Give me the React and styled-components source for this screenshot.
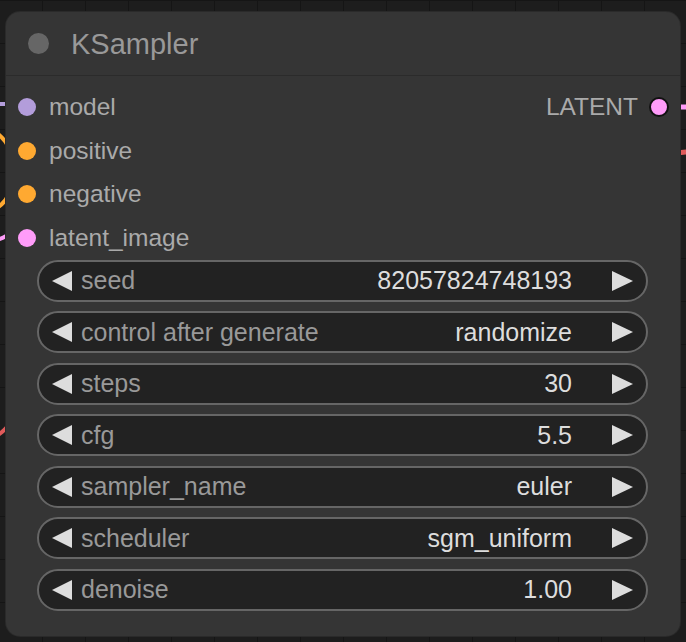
import styled, { createGlobalStyle } from 'styled-components'

const GlobalStyle = createGlobalStyle`
  html, body {
    margin: 0;
    padding: 0;
    background: #1d1d1d;
  }
  * { box-sizing: border-box; }
`

const inputs = [
  { name: 'model', color: '#b39ddb' },
  { name: 'positive', color: '#ffa931' },
  { name: 'negative', color: '#ffa931' },
  { name: 'latent_image', color: '#ff9cf9' },
]

const widgets = [
  { label: 'seed', value: '82057824748193' },
  { label: 'control after generate', value: 'randomize' },
  { label: 'steps', value: '30' },
  { label: 'cfg', value: '5.5' },
  { label: 'sampler_name', value: 'euler' },
  { label: 'scheduler', value: 'sgm_uniform' },
  { label: 'denoise', value: '1.00' },
]

function App() {
  return (
    <>
      <GlobalStyle />
      <Canvas>
        <Wires width="686" height="642">
          <path d="M-10 104 L8 104" stroke="#b39ddb" strokeWidth="4" fill="none" />
          <path d="M-10 128 C 2 136, 6 142, 8 146" stroke="#ffa931" strokeWidth="4" fill="none" />
          <path d="M-10 212 C 2 206, 6 200, 8 196" stroke="#ffa931" strokeWidth="4" fill="none" />
          <path d="M-10 242 C 0 240, 4 237, 8 235" stroke="#ff9cf9" strokeWidth="4" fill="none" />
          <path d="M-10 438 C 0 436, 4 430, 8 426" stroke="#e05a5a" strokeWidth="4" fill="none" />
          <path d="M676 107 L696 107" stroke="#ff9cf9" strokeWidth="5" fill="none" />
          <path d="M676 153 L696 151" stroke="#e05a5a" strokeWidth="5" fill="none" />
        </Wires>
        <Node>
          <Title>
            <TitleDot />
            <TitleText>KSampler</TitleText>
          </Title>
          <Slots>
            {inputs.map((input, index) => (
              <SlotRow key={input.name}>
                <InputSlot>
                  <Dot color={input.color} />
                  <SlotLabel>{input.name}</SlotLabel>
                </InputSlot>
                {index === 0 && (
                  <OutputSlot>
                    <SlotLabel>LATENT</SlotLabel>
                    <Dot color="#ff9cf9" $outlined />
                  </OutputSlot>
                )}
              </SlotRow>
            ))}
          </Slots>
          <Widgets>
            {widgets.map((w) => (
              <Widget key={w.label}>
                <Arrow $dir="left" />
                <WidgetLabel>{w.label}</WidgetLabel>
                <WidgetValue>{w.value}</WidgetValue>
                <Arrow $dir="right" />
              </Widget>
            ))}
          </Widgets>
        </Node>
      </Canvas>
    </>
  )
}

const Canvas = styled.div`
  position: relative;
  width: 686px;
  height: 642px;
  overflow: hidden;
  padding: 12px 6px 6px 6px;
  background-color: #1d1d1d;
  background-image:
    linear-gradient(to right, #151515 1px, transparent 1px),
    linear-gradient(to bottom, #151515 1px, transparent 1px);
  background-size: 43px 43px;
  background-position: -1px 0;
  font-family: Arial, "Liberation Sans", sans-serif;
`

const Wires = styled.svg`
  position: absolute;
  left: 0;
  top: 0;
`

const Node = styled.div`
  position: relative;
  width: 674px;
  height: 624px;
  background: #353535;
  border-radius: 14px;
  display: flex;
  flex-direction: column;
  box-shadow: 0 0 0 1px #2a2a2a;
`

const Title = styled.div`
  display: flex;
  align-items: center;
  height: 64px;
  padding-left: 22px;
  gap: 22px;
  border-bottom: 1px solid #2b2b2b;
`

const TitleDot = styled.div`
  width: 21px;
  height: 21px;
  border-radius: 50%;
  background: #666;
`

const TitleText = styled.div`
  color: #999;
  font-size: 29px;
  padding-top: 1px;
`

const Slots = styled.div`
  display: flex;
  flex-direction: column;
  padding-top: 9.5px;
`

const SlotRow = styled.div`
  display: flex;
  align-items: center;
  justify-content: space-between;
  height: 43.5px;
`

const InputSlot = styled.div`
  display: flex;
  align-items: center;
  gap: 13px;
  padding-left: 12px;
`

const OutputSlot = styled.div`
  display: flex;
  align-items: center;
  gap: 11px;
  padding-right: 11px;
`

const Dot = styled.div`
  width: ${(p) => (p.$outlined ? '20px' : '18px')};
  height: ${(p) => (p.$outlined ? '20px' : '18px')};
  border-radius: 50%;
  background: ${(p) => p.color};
  border: ${(p) => (p.$outlined ? '2px solid #111' : 'none')};
`

const SlotLabel = styled.span`
  color: #aaa;
  font-size: 24.5px;
`

const Widgets = styled.div`
  display: flex;
  flex-direction: column;
  gap: 9.5px;
  padding: 0 32px 0 31px;
`

const Widget = styled.div`
  display: flex;
  align-items: center;
  height: 42px;
  border: 2px solid #666;
  border-radius: 21px;
  background: #222;
  padding: 0 13px 0 13px;
`

const Arrow = styled.div`
  width: 0;
  height: 0;
  border-top: 10px solid transparent;
  border-bottom: 10px solid transparent;
  ${(p) =>
    p.$dir === 'left'
      ? 'border-right: 20px solid #ddd; margin-right: 9px;'
      : 'border-left: 21px solid #ddd; margin-left: 40px;'}
`

const WidgetLabel = styled.span`
  color: #999;
  font-size: 25px;
  flex: 1;
`

const WidgetValue = styled.span`
  color: #ddd;
  font-size: 25px;
`

export default App
